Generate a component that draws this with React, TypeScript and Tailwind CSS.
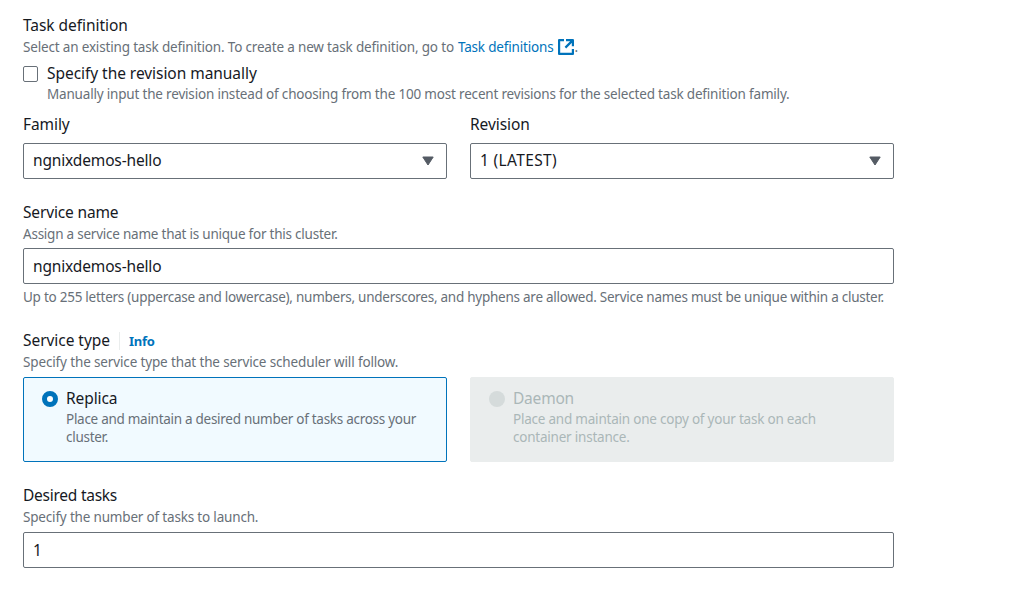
import type { ReactNode } from 'react';

function Label({ children, className = 'tracking-[-0.08px]' }: { children: ReactNode; className?: string }) {
  return <div className={`h-[22px] text-[15.5px] leading-[20px] whitespace-nowrap ${className}`}>{children}</div>;
}

function Hint({ children, className = '' }: { children: ReactNode; className?: string }) {
  return <div className={`text-[13.5px] leading-[18px] whitespace-nowrap ${className}`}>{children}</div>;
}

function Field({ children, select = false, className = '' }: { children: ReactNode; select?: boolean; className?: string }) {
  return (
    <div className={`flex h-9 items-center justify-between rounded-[2px] border border-[#687078] bg-white pr-3 pl-[9px] text-[15.5px] leading-[22px] ${className}`}>
      <span className={select ? 'pb-[3px]' : 'pb-px'}>{children}</span>
      {select && (
        <svg className="h-[10px] w-3" viewBox="0 0 12 10" fill="#545b64" stroke="#545b64" strokeLinejoin="round">
          <path d="M.8 1h10.4L6 9z" />
        </svg>
      )}
    </div>
  );
}

export default function App() {
  return (
    <main className="h-[597px] w-[1012px] bg-white pt-[15px] pl-[23px] font-['Noto_Sans',sans-serif] text-[#16191f]">
      <div className="w-[871px]">
        <section>
          <Label className="tracking-[-0.05px]">Task definition</Label>
          <Hint className="mt-px flex items-center text-[#687078]">
            <span className="tracking-[-0.17px]">Select an existing task definition. To create a new task definition, go to</span>
            <a className="ml-[4px] flex items-center text-[#0073bb]">
              <span className="tracking-[-0.17px]">Task definitions</span>
              <svg className="ml-[4px] h-4 w-4 shrink-0" viewBox="0 0 16 16" fill="none" stroke="currentColor" strokeWidth="2.2" strokeLinejoin="round">
                <path d="M6 1.1H1.1v13.8h13.8V10M8 1.1h6.9v6.2M14.9 1.1 7.4 8.6" />
              </svg>
            </a>
            <span className="ml-px">.</span>
          </Hint>
          <div className="mt-[7px] flex">
            <span className="mt-[3px] mr-[9px] h-4 w-[15px] rounded-[2px] border border-[#687078]" />
            <div>
              <Label className="tracking-[-0.05px]">Specify the revision manually</Label>
              <Hint className="tracking-[-0.185px] text-[#687078]">Manually input the revision instead of choosing from the 100 most recent revisions for the selected task definition family.</Hint>
            </div>
          </div>
          <div className="mt-[11px] grid grid-cols-2 gap-[23px]">
            <div>
              <Label>Family</Label>
              <Field select className="mt-[7px] tracking-[-0.15px]">ngnixdemos-hello</Field>
            </div>
            <div>
              <Label>Revision</Label>
              <Field select className="mt-[7px] tracking-[0.35px]">1 (LATEST)</Field>
            </div>
          </div>
        </section>

        <section className="mt-[23px]">
          <Label className="tracking-[-0.15px]">Service name</Label>
          <Hint className="mt-px tracking-[-0.23px] text-[#687078]">Assign a service name that is unique for this cluster.</Hint>
          <Field className="mt-[5px] tracking-[-0.15px]">ngnixdemos-hello</Field>
          <Hint className="mt-1 tracking-[-0.255px] text-[#687078]">Up to 255 letters (uppercase and lowercase), numbers, underscores, and hyphens are allowed. Service names must be unique within a cluster.</Hint>
        </section>

        <section className="mt-6">
          <div className="flex items-center">
            <Label className="tracking-[-0.05px]">Service type</Label>
            <a className="ml-[9px] border-l border-[#eaeded] pl-[9px] text-[13px] leading-[18px] font-bold tracking-[-0.2px] text-[#0073bb]">Info</a>
          </div>
          <Hint className="mt-px tracking-[-0.14px] text-[#687078]">Specify the service type that the service scheduler will follow.</Hint>
          <div className="mt-[6px] grid grid-cols-2 gap-[23px]">
            <div className="flex h-[85px] rounded-[2px] border border-[#0073bb] bg-[#f1faff] pt-[10px] pl-[18px]">
              <span className="mt-[3px] mr-[8px] h-4 w-4 rounded-full border-5 border-[#0073bb] bg-white" />
              <div>
                <Label>Replica</Label>
                <Hint className="tracking-[-0.28px] text-[#687078]">Place and maintain a desired number of tasks across your<br />cluster.</Hint>
              </div>
            </div>
            <div className="flex h-[85px] rounded-[2px] border border-[#eaeded] bg-[#eaeded] pt-[10px] pl-[18px] text-[#aab7b8]">
              <span className="mt-[3px] mr-[8px] h-4 w-4 rounded-full bg-[#d5dbdb]" />
              <div>
                <Label className="tracking-[-0.2px]">Daemon</Label>
                <Hint className="tracking-[-0.22px]">Place and maintain one copy of your task on each<br />container instance.</Hint>
              </div>
            </div>
          </div>
        </section>

        <section className="mt-[23px]">
          <Label className="tracking-[-0.25px]">Desired tasks</Label>
          <Hint className="mt-px tracking-[-0.18px] text-[#687078]">Specify the number of tasks to launch.</Hint>
          <Field className="mt-[6px]">1</Field>
        </section>
      </div>
    </main>
  );
}
